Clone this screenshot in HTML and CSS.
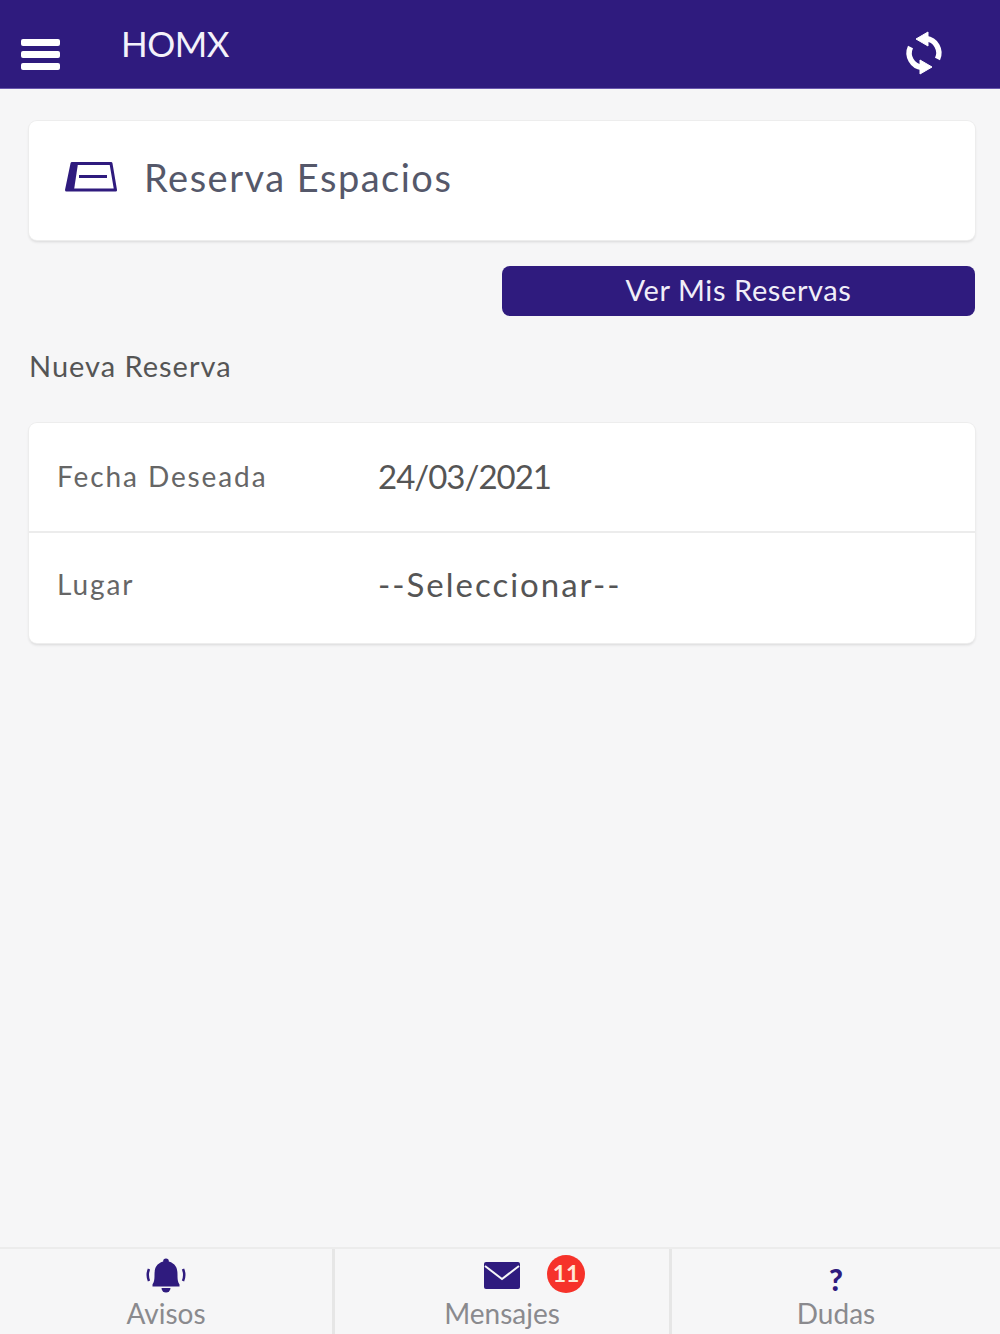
FILE: index.html
```html
<!DOCTYPE html>
<html lang="es">
  <head>
    <meta charset="UTF-8" />
    <meta name="viewport" content="width=device-width, initial-scale=1.0" />
    <title>HOMX</title>
    <link rel="stylesheet" href="styles.css">
  </head>
  <body>
    <header class="topbar">
      <div class="burger"><span></span><span></span><span></span></div>
      <div class="brand">HOMX</div>
      <svg class="sync" viewBox="0 0 40 48" width="40" height="48">
        <path d="M22 9.500 A14.500 14.500 0 0 1 33.500 30" fill="none" stroke="#fff" stroke-width="5.500"/>
        <path d="M18 38.500 A14.500 14.500 0 0 1 6.500 18" fill="none" stroke="#fff" stroke-width="5.500"/>
        <path d="M12 10 L24 3 V17 Z" fill="#fff" stroke="#fff" stroke-linejoin="round"/>
        <path d="M28 38 L16 31 V45 Z" fill="#fff" stroke="#fff" stroke-linejoin="round"/>
      </svg>
    </header>

    <main class="content">
      <section class="card title-card">
        <svg class="ticket" viewBox="0 0 52 30" width="52" height="30">
          <path d="M7 1.500 H46 L50.500 28 H1.500 Z" fill="none" stroke="#2f1b7e" stroke-width="3" stroke-linejoin="round"/>
          <path d="M7 1.500 H13 L9 28 H1.500 Z" fill="#2f1b7e"/>
          <rect x="14" y="13" width="28" height="3" fill="#2f1b7e"/>
        </svg>
        <h1>Reserva Espacios</h1>
      </section>

      <div class="actions">
        <a class="btn">Ver Mis Reservas</a>
      </div>

      <h2 class="section-label">Nueva Reserva</h2>

      <section class="card form-card">
        <div class="row">
          <span class="row-label">Fecha Deseada</span>
          <span class="row-value date">24/03/2021</span>
        </div>
        <div class="row">
          <span class="row-label">Lugar</span>
          <span class="row-value select">--Seleccionar--</span>
        </div>
      </section>
    </main>

    <footer class="tabs">
      <div class="tab">
        <svg class="tab-icon" viewBox="0 0 40 36" width="40" height="36">
          <path d="M20 0.500 a2.800 2.800 0 0 1 2.800 3 C31 6 31.500 12 31.500 17 C31.500 22 32 24 33.500 26.500 V28.500 H6.500 V26.500 C8 24 8.500 22 8.500 17 C8.500 12 9 6 17.200 3.500 A2.800 2.800 0 0 1 20 0.500 Z" fill="#2f1b7e"/>
          <path d="M15.500 30 H24.500 A4.500 4.500 0 0 1 15.500 30 Z" fill="#2f1b7e"/>
          <path d="M3 11 Q0.500 17 3 23 M37 11 Q39.500 17 37 23" fill="none" stroke="#2f1b7e" stroke-width="2.500"/>
        </svg>
        <span class="tab-label">Avisos</span>
      </div>
      <div class="tab">
        <div class="tab-icon-wrap">
          <svg class="tab-icon" viewBox="0 0 40 36" width="40" height="36">
            <rect x="2" y="4" width="36" height="27" rx="2" fill="#2f1b7e"/>
            <path d="M3 8 L20 21 L37 8" fill="none" stroke="#f6f6f7" stroke-width="2"/>
          </svg>
          <span class="badge">11</span>
        </div>
        <span class="tab-label">Mensajes</span>
      </div>
      <div class="tab">
        <div class="question">?</div>
        <span class="tab-label">Dudas</span>
      </div>
    </footer>
  </body>
</html>
```

FILE: styles.css
```css
* {
  box-sizing: border-box;
}
html,
body {
  height: 100%;
}
body {
  margin: 0;
  height: 1334px;
  display: flex;
  flex-direction: column;
  overflow: hidden;
  font-family: "Lato", "Noto Sans", sans-serif;
  color: #555;
  background-color: #f6f6f7;
}
.topbar {
  flex: none;
  height: 89px;
  display: flex;
  align-items: flex-start;
  background-color: #2f1b7e;
  border-bottom: 1px solid #6a58ad;
  padding: 0 56px 0 21px;
}
.burger {
  width: 39px;
  margin-top: 39px;
  display: flex;
  flex-direction: column;
  gap: 5px;
}
.burger span {
  height: 7px;
  border-radius: 2px;
  background-color: #fff;
}
.brand {
  margin: 23px 0 0 61px;
  font-size: 35px;
  line-height: 41px;
  color: #f4f2fa;
  letter-spacing: -0.5px;
}
.sync {
  margin: 29px 0 0 auto;
}
.content {
  flex: 1;
  padding: 32px 25px 0 29px;
}
.card {
  background-color: #fff;
  border-radius: 8px;
  box-shadow: 0 0 0 1px #ededed, 0 2px 3px rgba(0, 0, 0, 0.12);
}
.title-card {
  height: 119px;
  display: flex;
  align-items: center;
  padding: 0 0 8px 36px;
}
.ticket {
  flex: none;
}
.title-card h1 {
  margin: 0 0 0 27px;
  font-size: 38px;
  font-weight: 400;
  color: #55586a;
  letter-spacing: 1.5px;
}
.actions {
  display: flex;
  justify-content: flex-end;
  margin-top: 26px;
}
.btn {
  width: 473px;
  height: 50px;
  display: flex;
  align-items: center;
  justify-content: center;
  padding-bottom: 3px;
  border-radius: 8px;
  background-color: #2f1b7e;
  color: #f0eef8;
  font-size: 29px;
  letter-spacing: 0.6px;
}
.section-label {
  margin: 31px 0 0;
  font-size: 29px;
  line-height: 38px;
  font-weight: 400;
  color: #555;
  letter-spacing: 1px;
}
.form-card {
  margin-top: 38px;
  height: 220px;
  display: flex;
  flex-direction: column;
}
.row {
  height: 108px;
  display: flex;
  align-items: center;
  padding: 0 0 3px 28px;
}
.row + .row {
  flex: 1;
  padding-bottom: 8px;
  border-top: 2px solid #ececec;
}
.row-label {
  width: 321px;
  font-size: 28px;
  color: #666;
  letter-spacing: 1.9px;
}
.row-value {
  font-size: 33px;
  color: #555;
}
.date {
  letter-spacing: -1px;
}
.select {
  letter-spacing: 2px;
}
.tabs {
  flex: none;
  height: 87px;
  display: grid;
  grid-template-columns: 332px 337px 1fr;
  border-top: 2px solid #ececec;
  background-color: #f6f6f7;
}
.tab {
  display: flex;
  flex-direction: column;
  align-items: center;
  font-size: 28px;
  line-height: 32px;
  color: #8a8a8e;
  padding-top: 9px;
}
.tab-label {
  margin-top: 3px;
}
.tab + .tab {
  border-left: 3px solid #e6e6e6;
}
.tab-icon {
  display: block;
}
.tab-icon-wrap {
  position: relative;
}
.badge {
  position: absolute;
  left: 65px;
  top: -3px;
  width: 38px;
  height: 38px;
  border-radius: 50%;
  background-color: #f6322a;
  color: #ffe9d8;
  font-size: 23px;
  font-weight: 700;
  line-height: 36px;
  text-align: center;
}
.question {
  height: 30px;
  margin-top: 6px;
  font-size: 30px;
  line-height: 30px;
  font-weight: 900;
  color: #2f1b7e;
}
```
